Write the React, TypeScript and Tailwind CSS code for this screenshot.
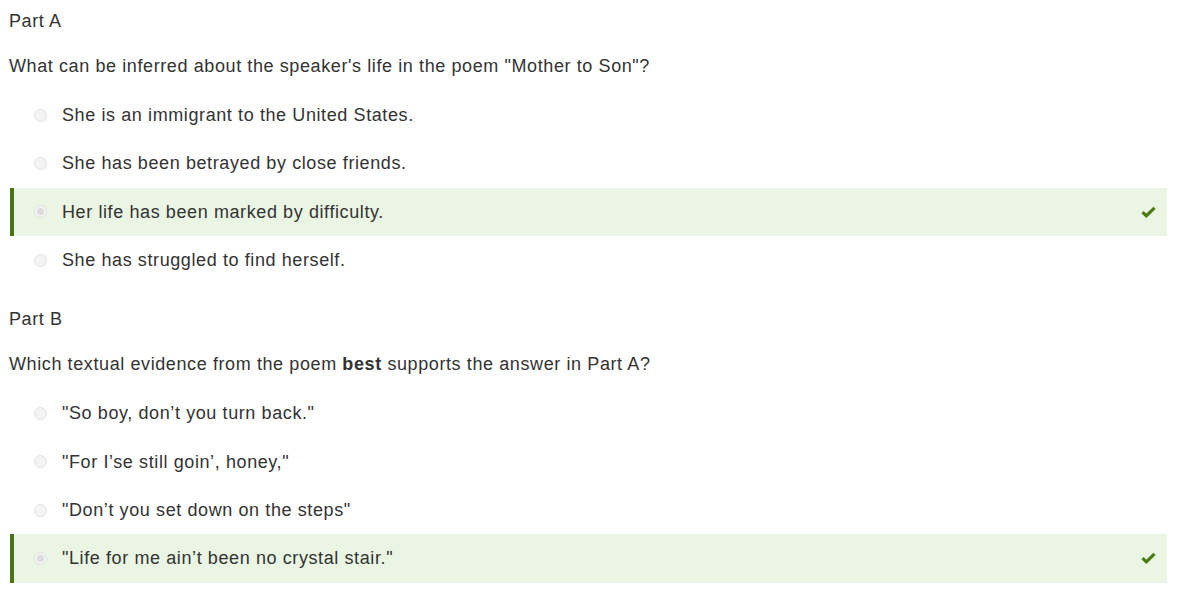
import React from 'react';

type Option = { text: string; correct?: boolean };

const partA: Option[] = [
    { text: 'She is an immigrant to the United States.' },
    { text: 'She has been betrayed by close friends.' },
    { text: 'Her life has been marked by difficulty.', correct: true },
    { text: 'She has struggled to find herself.' },
];

const partB: Option[] = [
    { text: '"So boy, don’t you turn back."' },
    { text: '"For I’se still goin’, honey,"' },
    { text: '"Don’t you set down on the steps"' },
    { text: '"Life for me ain’t been no crystal stair."', correct: true },
];

const Radio: React.FC<{ checked?: boolean }> = ({ checked }) => (
    <span className="w-[13px] h-[13px] rounded-full border border-[#e2e2e2] bg-[#f4f4f4] flex items-center justify-center shrink-0">
        {checked && <span className="w-[7px] h-[7px] rounded-full bg-[#dcdcdc]" />}
    </span>
);

const Check = () => (
    <svg width="15" height="12" viewBox="0 0 15 12" className="shrink-0">
        <path d="M1.5 6.2 L5.3 9.8 L13.5 1.8" fill="none" stroke="#4b7a12" strokeWidth="3.2" strokeLinejoin="miter" />
    </svg>
);

const OptionRow: React.FC<{ o: Option }> = ({ o }) => (
    <div
        className={`h-[48.33px] flex items-center pr-[11px] ${
            o.correct ? 'bg-[#eaf5e3] border-l-4 border-[#4b7417] pl-[20px]' : 'pl-[24px]'
        }`}
    >
        <Radio checked={o.correct} />
        <span className="ml-[15px] flex-1">{o.text}</span>
        {o.correct && <Check />}
    </div>
);

export default function App() {
    return (
        <div
            className="w-[1181px] h-[589px] bg-white text-[#333333] text-[18px] leading-[24px] tracking-[0.6px] overflow-hidden pl-[10px] pr-[14px] pt-[9px]"
            style={{ fontFamily: '"Liberation Sans", Arial, sans-serif' }}
        >
            <div className="-ml-[1px]">Part A</div>
            <div className="-ml-[1px] mt-[21px]">What can be inferred about the speaker's life in the poem "Mother to Son"?</div>
            <div className="mt-[13px]">
                {partA.map((o, i) => <OptionRow key={i} o={o} />)}
            </div>
            <div className="-ml-[1px] mt-[23px]">Part B</div>
            <div className="-ml-[1px] mt-[21px]">
                Which textual evidence from the poem <strong className="font-bold">best</strong> supports the answer in Part A?
            </div>
            <div className="mt-[13px]">
                {partB.map((o, i) => <OptionRow key={i} o={o} />)}
            </div>
        </div>
    );
}
